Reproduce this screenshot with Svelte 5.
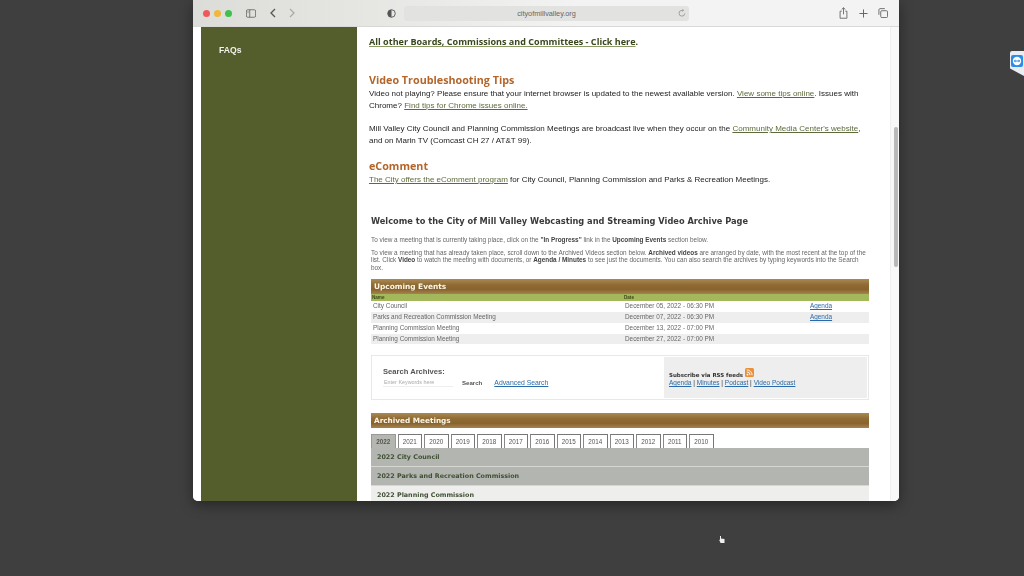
<script>
  const years = [2022, 2021, 2020, 2019, 2018, 2017, 2016, 2015, 2014, 2013, 2012, 2011, 2010];
  const events = [
    { name: 'City Council', date: 'December 05, 2022 - 06:30 PM', agenda: true },
    { name: 'Parks and Recreation Commission Meeting', date: 'December 07, 2022 - 06:30 PM', agenda: true },
    { name: 'Planning Commission Meeting', date: 'December 13, 2022 - 07:00 PM', agenda: false },
    { name: 'Planning Commission Meeting', date: 'December 27, 2022 - 07:00 PM', agenda: false }
  ];
</script>

<div class="desktop">
  <div class="window">
    <header class="toolbar">
      <div class="lights"><i class="red"></i><i class="yellow"></i><i class="green"></i></div>
      <svg class="sidebar-icon" viewBox="0 0 12 10" width="10" height="9"><rect x=".5" y=".5" width="11" height="9" rx="1.5" fill="none" stroke="#666"/><path d="M4.5 .5v9" stroke="#666"/><path d="M1.500 2.500h2M1.500 4h2" stroke="#888" stroke-width=".7"/></svg>
      <svg class="back" viewBox="0 0 6 10" width="6" height="10"><path d="M5 1 1 5l4 4" fill="none" stroke="#555" stroke-width="1.3"/></svg>
      <svg class="forward" viewBox="0 0 6 10" width="6" height="10"><path d="m1 1 4 4-4 4" fill="none" stroke="#aaa" stroke-width="1.3"/></svg>
      <svg class="shield" viewBox="0 0 10 10" width="9" height="9"><circle cx="5" cy="5" r="4.2" fill="none" stroke="#555"/><path d="M5 .8a4.200 4.200 0 0 0 0 8.400z" fill="#555"/></svg>
      <div class="address">
        <span>cityofmillvalley.org</span>
        <svg viewBox="0 0 10 10" width="8" height="8"><path d="M8.500 5.500A3.600 3.600 0 1 1 5 1.700h1.600M5.400 .2 7 1.700 5.400 3.200" fill="none" stroke="#888" stroke-width=".9"/></svg>
      </div>
      <div class="actions">
        <svg viewBox="0 0 10 13" width="9" height="12"><path d="M3 4.500H1.200v7.800h7.600V4.500H7M5 8V.8M3 2.600 5 .7l2 1.900" fill="none" stroke="#666"/></svg>
        <svg viewBox="0 0 10 10" width="9" height="9"><path d="M5 .5v9M.5 5h9" stroke="#666" stroke-width="1.100"/></svg>
        <svg viewBox="0 0 11 11" width="10" height="10"><rect x="3" y="3" width="7.500" height="7.500" rx="1.200" fill="none" stroke="#666"/><path d="M1 7.500V2A1.400 1.400 0 0 1 2 .7h5.500" fill="none" stroke="#666"/></svg>
      </div>
    </header>

    <div class="viewport">
      <aside class="side"><a href="#faq">FAQs</a></aside>
      <main class="content">
        <p class="boards"><a href="#boards">All other Boards, Commissions and Committees - Click here</a>.</p>

        <h2 class="tips">Video Troubleshooting Tips</h2>
        <p class="body">Video not playing? Please ensure that your internet browser is updated to the newest available version. <a href="#tips">View some tips online</a>. Issues with Chrome? <a href="#chrome">Find tips for Chrome issues online.</a></p>
        <p class="body broadcast">Mill Valley City Council and Planning Commission Meetings are broadcast live when they occur on the <a href="#cmc">Community Media Center's website</a>, and on Marin TV (Comcast CH 27 / AT&amp;T 99).</p>

        <h2 class="ecomment">eComment</h2>
        <p class="body"><a href="#ecomment">The City offers the eComment program</a> for City Council, Planning Commission and Parks &amp; Recreation Meetings.</p>

        <section class="archive">
          <h1>Welcome to the City of Mill Valley Webcasting and Streaming Video Archive Page</h1>
          <p class="small first">To view a meeting that is currently taking place, click on the <b>"In Progress"</b> link in the <b>Upcoming Events</b> section below.</p>
          <p class="small second">To view a meeting that has already taken place, scroll down to the Archived Videos section below. <b>Archived videos</b> are arranged by date, with the most recent at the top of the list. Click <b>Video</b> to watch the meeting with documents, or <b>Agenda / Minutes</b> to see just the documents. You can also search the archives by typing keywords into the Search box.</p>

          <div class="bar upcoming">Upcoming Events</div>
          <div class="thead"><span>Name</span><span>Date</span><span></span></div>
          {#each events as e, i}
            <div class="row" class:alt={i % 2 === 1}>
              <span>{e.name}</span>
              <span>{e.date}</span>
              <span>{#if e.agenda}<a href="#agenda">Agenda</a>{/if}</span>
            </div>
          {/each}

          <div class="search-box">
            <div class="search">
              <div class="search-title">Search Archives:</div>
              <div class="search-line">
                <span class="input">Enter Keywords here</span>
                <span class="btn">Search</span>
                <a href="#advanced">Advanced Search</a>
              </div>
            </div>
            <div class="rss">
              <div class="rss-title">
                <b>Subscribe via RSS feeds</b>
                <svg viewBox="0 0 9 9" width="9" height="9"><rect width="9" height="9" rx="1.500" fill="#e8913a"/><circle cx="2.500" cy="6.600" r=".9" fill="#fff"/><path d="M1.800 3.900a3.300 3.300 0 0 1 3.300 3.300M1.800 1.900a5.300 5.300 0 0 1 5.300 5.300" fill="none" stroke="#fff" stroke-width=".9"/></svg>
              </div>
              <div class="rss-links"><a href="#a">Agenda</a> | <a href="#m">Minutes</a> | <a href="#p">Podcast</a> | <a href="#v">Video Podcast</a></div>
            </div>
          </div>

          <div class="bar archived">Archived Meetings</div>
          <div class="tabs">
            {#each years as y, i}<span class="tab" class:active={i === 0}>{y}</span>{/each}
          </div>
          <div class="group dark">2022 City Council</div>
          <div class="group dark">2022 Parks and Recreation Commission</div>
          <div class="group light">2022 Planning Commission</div>
        </section>
      </main>
      <div class="scrollbar"><div class="thumb"></div></div>
    </div>
  </div>

  <div class="tv-tab">
    <span class="tv-icon"><svg viewBox="0 0 12 12" width="12" height="12"><rect width="12" height="12" rx="2" fill="#2e8be6"/><circle cx="6" cy="6" r="4.200" fill="#fff"/><path d="M2.600 6 4.400 4.600v.9h3.200v-.9L9.400 6 7.600 7.400v-.9H4.400v.9z" fill="#2e8be6"/></svg></span>
  </div>
  <svg class="cursor" viewBox="0 0 8 9" width="8" height="9"><path d="M2 1v4L1 4.500 2.500 8h4V4L3 3.500V1z" fill="#eee"/></svg>
</div>

<style>
  :global(body) { margin: 0; background: #3f3f3f; }
  .desktop { position: relative; width: 1024px; height: 576px; overflow: hidden; background: #3f3f3f; font-family: "Liberation Sans", Arial, sans-serif; }
  .window { position: absolute; left: 193px; top: 0; width: 706px; height: 501px; display: flex; flex-direction: column; background: #fff; border-radius: 0 0 5px 5px; overflow: hidden; box-shadow: 0 4px 14px rgba(0,0,0,.4); filter: blur(.4px); }
  .toolbar { height: 27px; flex: none; display: flex; align-items: center; background: linear-gradient(90deg, #dcdcd8 0, #e6e6e3 25%, #f3f3f3 55%); border-bottom: 1px solid #d8d8d6; box-sizing: border-box; }
  .lights { display: flex; gap: 4px; margin-left: 10px; }
  .lights i { width: 7px; height: 7px; border-radius: 50%; }
  .red { background: #ee5a5a; } .yellow { background: #f0b73c; } .green { background: #3fc04f; }
  .sidebar-icon { margin-left: 14px; }
  .back { margin-left: 14px; }
  .forward { margin-left: 13px; }
  .shield { margin-left: 92px; }
  .address { margin-left: 8px; width: 285px; height: 15px; border-radius: 3px; background: #e2e2e1; display: flex; align-items: center; justify-content: center; position: relative; font-size: 7.3px; color: #666; }
  .address svg { position: absolute; right: 3px; top: 3px; }
  .actions { margin-left: 150px; display: flex; align-items: center; gap: 10.5px; }
  .viewport { flex: 1; min-height: 0; display: flex; overflow: hidden; background: #fff; padding-left: 8px; }
  .side { width: 156px; flex: none; background: #535e2c; padding: 12px 0 0 18px; box-sizing: border-box; }
  .side a { color: #f2f2ea; font-size: 8.6px; font-weight: 700; text-decoration: none; }
  .content { flex: 1; min-width: 0; padding: 8px 0 0 12px; box-sizing: border-box; }
  p { margin: 0; }
  .boards { font: 700 9.05px/14px "Open Sans", sans-serif; color: #2c3a18; }
  .boards a { color: #39471c; text-decoration-color: #8b9a64; }
  h2 { margin: 0; font: 700 10.75px/14px "Open Sans", sans-serif; color: #b3652a; }
  .tips { margin-top: 24px; }
  .ecomment { margin-top: 12px; }
  .body { font-size: 8.02px; line-height: 12px; color: #222; margin-top: 1px; width: 500px; }
  .body a { color: #5c6a3c; }
  .broadcast { margin-top: 11px; }
  .archive { width: 498px; margin: 28px 0 0 2px; }
  h1 { margin: 0; font: 700 8.24px/14px "DejaVu Sans", sans-serif; color: #3a3a3a; }
  .small { font-size: 6.4px; line-height: 7.6px; color: #666; }
  .small b { color: #444; }
  .first { margin-top: 8px; }
  .second { margin-top: 5px; }
  .bar { height: 15px; background: linear-gradient(#a98a55, #8f6a32 40%, #8a642e 70%, #a5844f); color: #fbf6e6; font: 700 7.4px/15px "DejaVu Sans", sans-serif; padding-left: 3px; }
  .upcoming { margin-top: 8px; }
  .thead { height: 7px; background: #a3b85a; color: #3c4a18; font: 700 4.6px/7px "Liberation Sans", sans-serif; display: grid; grid-template-columns: 252px 185px 1fr; padding-left: 1px; }
  .row { height: 10.75px; display: grid; grid-template-columns: 252px 185px 1fr; padding-left: 2px; font-size: 6.4px; line-height: 10.75px; color: #666; }
  .row.alt { background: #eeeeee; }
  .row a, .search a, .rss a { color: #2a6aa8; }
  .search-box { margin-top: 11px; height: 45px; border: 1px solid #e8e8e8; box-sizing: border-box; display: flex; padding: 1px; }
  .search { width: 291px; padding: 10px 0 0 10px; box-sizing: border-box; }
  .search-title { font-size: 7.6px; font-weight: 700; color: #555; line-height: 9px; }
  .search-line { display: flex; align-items: center; margin-top: 1px; font-size: 6.85px; }
  .input { width: 70px; height: 10px; border-bottom: 1px solid #eee; font-size: 5.4px; line-height: 10px; color: #aaa; padding-left: 1px; box-sizing: border-box; }
  .btn { margin-left: 9px; font-size: 6.1px; color: #555; font-weight: 700; }
  .search-line a { margin-left: 12px; }
  .rss { flex: 1; background: #eeeeee; padding: 13px 0 0 5px; box-sizing: border-box; font-size: 6.5px; color: #333; }
  .rss-title { display: flex; align-items: flex-end; gap: 2px; height: 9px; color: #333; }
  .rss-title b { line-height: 8px; font-family: "DejaVu Sans", sans-serif; font-size: 5.47px; }
  .rss-title svg { margin-bottom: 2px; }
  .rss-links { line-height: 8px; }
  .archived { margin-top: 13px; font-size: 7.3px; }
  .tabs { display: flex; gap: 2px; margin-top: 6px; height: 14px; }
  .tab { width: 24.5px; height: 14px; box-sizing: border-box; border: 1px solid #777; border-bottom: 0; border-left-color: #888; background: #fff; font-size: 6.3px; line-height: 13px; text-align: center; color: #555; }
  .tab.active { background: #b4b6b0; border-color: #999; font-weight: 700; }
  .group { height: 19px; box-sizing: border-box; padding-left: 6px; font: 700 6.38px/18px "DejaVu Sans", sans-serif; color: #3f4f32; border-bottom: 1px solid #d6d7d3; }
  .dark { background: #b3b5b0; }
  .light { background: #eeefec; }
  .scrollbar { width: 9px; flex: none; background: #f8f8f8; border-left: 1px solid #efefef; box-sizing: border-box; padding: 100px 1px 0 3px; }
  .thumb { height: 140px; border-radius: 3px; background: #b9b9b9; }
  .tv-tab { position: absolute; left: 1010px; top: 51px; width: 14px; height: 25px; background: #e9eef5; border-radius: 2px 0 0 2px; clip-path: polygon(0 0, 100% 0, 100% 100%, 0 70%); display: flex; padding: 2px 0 0 1px; box-sizing: border-box; }
  .tv-icon { display: block; height: 12px; }
  .cursor { position: absolute; left: 718px; top: 535px; }
</style>
